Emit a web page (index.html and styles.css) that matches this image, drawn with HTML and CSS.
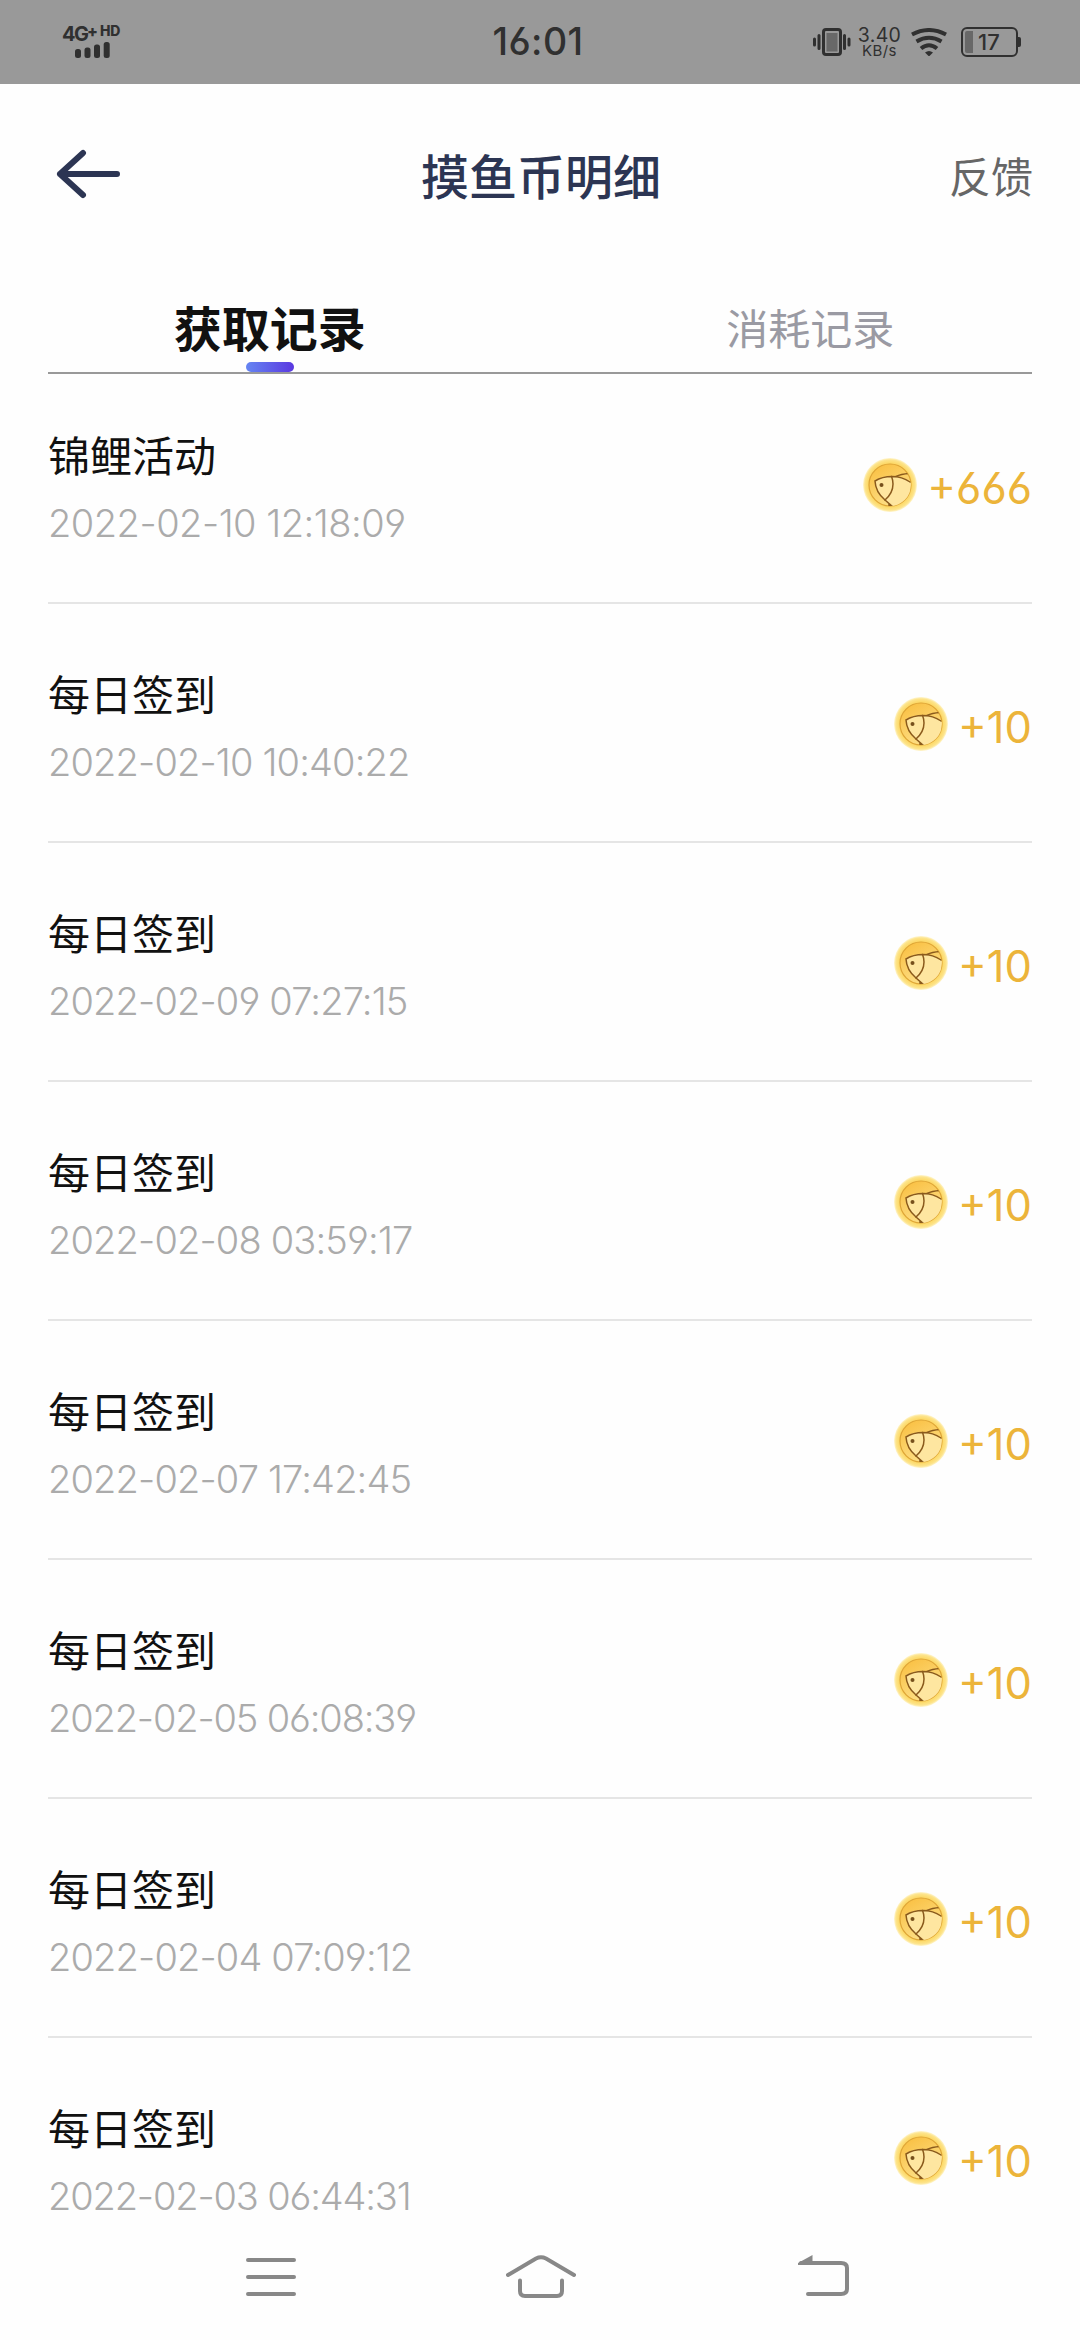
FILE: index.html
```html
<!DOCTYPE html>
<html lang="zh-CN">
<head>
<meta charset="utf-8">
<title>摸鱼币明细</title>
<link rel="stylesheet" href="styles.css">
</head>
<body>
<svg class="defs" width="0" height="0" aria-hidden="true">
  <defs>
    <radialGradient id="rim" cx="50%" cy="50%" r="50%">
      <stop offset="0.72" stop-color="#fbcf58"/>
      <stop offset="0.84" stop-color="#fddc70"/>
      <stop offset="0.93" stop-color="#fde48c"/>
      <stop offset="1" stop-color="#fff6d2"/>
    </radialGradient>
    <linearGradient id="face" x1="0" y1="0" x2="0.5" y2="1">
      <stop offset="0" stop-color="#f9bd3c"/>
      <stop offset="1" stop-color="#fddf86"/>
    </linearGradient>
    <clipPath id="faceclip"><circle cx="27" cy="27" r="21"/></clipPath>
    <symbol id="coin" viewBox="0 0 54 54">
      <circle cx="27" cy="27" r="27" fill="url(#rim)"/>
      <circle cx="27" cy="27" r="21" fill="url(#face)" stroke="#dea536" stroke-width="1.2"/>
      <g clip-path="url(#faceclip)">
        <path d="M12 22 Q20 18 29 18 Q40 18 48 25 L47 38 Q38 50 28 49 L22 42 Q13 34 12 22Z" fill="#fee6a0"/>
        <g fill="none" stroke="#8a5a1c" stroke-width="1.5" stroke-linecap="round">
          <path d="M47 24 Q39 18.5 29 18.5 Q19 18.5 12 23 Q12.500 34 22 42 Q30 35 30 26 Q30 22 28.500 18.500"/>
          <path d="M33 18.500 Q38 16 46 15.500"/>
          <path d="M22 42 L30 49 M26 46 V50"/>
        </g>
      </g>
      <circle cx="18.500" cy="27" r="2" fill="#76501c"/>
    </symbol>
  </defs>
</svg>

<header class="status">
  <div class="network">
    <div class="network-type"><span>4G</span><b class="plus">+</b><b class="hd">HD</b></div>
    <svg class="signal" width="35" height="16" viewBox="0 0 35 16"><g fill="#303030"><rect x="0" y="7" width="6" height="9" rx="2.500"/><rect x="9.500" y="5.500" width="6" height="10.500" rx="2.500"/><rect x="19" y="2.500" width="6" height="13.500" rx="2.500"/><rect x="28.700" y="0" width="6" height="16" rx="2.500"/></g></svg>
  </div>
  <time class="clock">16:01</time>
  <div class="indicators">
    <svg class="vibrate" width="38" height="28" viewBox="0 0 38 28"><rect x="10.500" y="1.500" width="17" height="25" rx="2.500" fill="none" stroke="#303030" stroke-width="3"/><rect x="13.500" y="5" width="11" height="18.500" fill="#686868"/><path d="M1.500 11v6M6 7.500v13M31.500 7.500v13M36 11v6" stroke="#303030" stroke-width="3" stroke-linecap="round"/></svg>
    <div class="speed"><span class="rate">3.40</span><span class="unit">KB/s</span></div>
    <svg class="wifi" width="36" height="28" viewBox="0 0 36 28"><g fill="none" stroke="#303030" stroke-width="4"><path d="M1 6.500Q18-2.500 35 6.500"/><path d="M5.500 13.500Q18 6 30.500 13.500"/><path d="M10 20.500Q18 14 26 20.500"/></g><path d="M14 24.500Q18 21.500 22 24.500L18 28.500Z" fill="#303030"/></svg>
    <div class="battery"><span class="level"></span><span class="percent">17</span></div>
  </div>
</header>

<nav class="titlebar">
  <svg class="back" width="64" height="50" viewBox="0 0 64 50"><path d="M61 25H4M27 4L4 25L27 46" fill="none" stroke="#2c3553" stroke-width="6" stroke-linecap="round" stroke-linejoin="round"/></svg>
  <h1 class="title">摸鱼币明细</h1>
  <a class="feedback">反馈</a>
</nav>

<div class="tabs">
  <div class="tab active">获取记录</div>
  <div class="tab">消耗记录</div>
</div>

<main class="list">
  <div class="row"><div class="info"><div class="name">锦鲤活动</div><div class="date">2022-02-10 12:18:09</div></div><div class="amount"><svg class="coin"><use href="#coin"/></svg><span>+666</span></div></div>
  <div class="row"><div class="info"><div class="name">每日签到</div><div class="date">2022-02-10 10:40:22</div></div><div class="amount"><svg class="coin"><use href="#coin"/></svg><span>+10</span></div></div>
  <div class="row"><div class="info"><div class="name">每日签到</div><div class="date">2022-02-09 07:27:15</div></div><div class="amount"><svg class="coin"><use href="#coin"/></svg><span>+10</span></div></div>
  <div class="row"><div class="info"><div class="name">每日签到</div><div class="date">2022-02-08 03:59:17</div></div><div class="amount"><svg class="coin"><use href="#coin"/></svg><span>+10</span></div></div>
  <div class="row"><div class="info"><div class="name">每日签到</div><div class="date">2022-02-07 17:42:45</div></div><div class="amount"><svg class="coin"><use href="#coin"/></svg><span>+10</span></div></div>
  <div class="row"><div class="info"><div class="name">每日签到</div><div class="date">2022-02-05 06:08:39</div></div><div class="amount"><svg class="coin"><use href="#coin"/></svg><span>+10</span></div></div>
  <div class="row"><div class="info"><div class="name">每日签到</div><div class="date">2022-02-04 07:09:12</div></div><div class="amount"><svg class="coin"><use href="#coin"/></svg><span>+10</span></div></div>
  <div class="row"><div class="info"><div class="name">每日签到</div><div class="date">2022-02-03 06:44:31</div></div><div class="amount"><svg class="coin"><use href="#coin"/></svg><span>+10</span></div></div>
</main>

<footer class="sysnav">
  <svg width="50" height="44" viewBox="0 0 50 44"><path d="M2 5H48M2 22H48M2 39H48" stroke="#888" stroke-width="4" stroke-linecap="round"/></svg>
  <svg class="home" width="70" height="44" viewBox="0 0 70 44"><g fill="none" stroke="#888" stroke-width="4" stroke-linecap="round"><path d="M2 20L30 3.500Q35 1 40 3.500L68 20"/><path d="M14 25.500V36Q14 41 19 41H51Q56 41 56 36V25.500"/></g></svg>
  <svg width="51" height="44" viewBox="0 0 51 44"><path d="M3 8H43Q49 8 49 13V34Q49 39 43 39H10" fill="none" stroke="#888" stroke-width="4" stroke-linecap="round"/><path d="M0 10V8L14.500 0V10Z" fill="#888"/></svg>
</footer>
</body>
</html>
```
FILE: styles.css
```css
* { box-sizing: border-box; }

body {
  margin: 0;
  width: 1080px;
  height: 2340px;
  overflow: hidden;
  display: flex;
  flex-direction: column;
  background: #fefefe;
  font-family: Inter, "Noto Sans CJK SC", sans-serif;
  font-feature-settings: "cv03", "cv04";
}

svg { display: block; flex: none; }
.defs { position: absolute; }

.status {
  height: 84px;
  flex: none;
  background: #999;
  color: #303030;
  display: grid;
  grid-template-columns: 1fr auto 1fr;
  align-items: center;
  padding: 0 60px 0 62px;
}

.network { width: 62px; }
.network-type {
  display: flex;
  height: 17px;
  line-height: 17px;
  font-size: 20px;
  font-weight: 700;
  letter-spacing: -1.5px;
  margin-bottom: -1px;
}
.network-type span { width: 25px; }
.plus { font-size: 16px; line-height: 10px; width: 13px; font-weight: 800; }
.hd { font-size: 14px; line-height: 10px; letter-spacing: -0.2px; font-weight: 800; }
.signal { margin-left: 13px; }

.clock { font-size: 37.500px; font-weight: 500; line-height: 84px; letter-spacing: 0.4px; margin-right: 6px; }

.indicators { display: flex; align-items: center; justify-content: flex-end; }
.vibrate { margin-right: 9px; }
.speed { width: 39px; margin-right: 12px; padding-top: 1px; display: flex; flex-direction: column; align-items: center; }
.rate { font-size: 19.500px; line-height: 17px; letter-spacing: 0.3px; }
.unit { font-size: 15px; line-height: 14px; letter-spacing: 0.4px; }
.battery {
  position: relative;
  width: 57px;
  height: 30px;
  margin: 0 2px 0 14px;
  padding: 2px;
  border: 2px solid #303030;
  border-radius: 6px;
  display: flex;
  align-items: center;
}
.battery::after {
  content: "";
  position: absolute;
  right: -5px;
  top: 8px;
  width: 3px;
  height: 10px;
  border-radius: 0 2px 2px 0;
  background: #303030;
}
.level { width: 8px; height: 22px; background: #686868; border-radius: 2px 0 0 2px; }
.percent { font-size: 22px; font-weight: 500; line-height: 22px; margin-left: 5px; }

.titlebar {
  height: 180px;
  flex: none;
  display: grid;
  grid-template-columns: 1fr auto 1fr;
  align-items: center;
  padding: 0 47px 0 56px;
}
.title { margin: 0; font-size: 48px; font-weight: 500; line-height: 60px; color: #2c3553; padding-top: 7px; padding-right: 7px; }
.feedback { justify-self: end; font-size: 42px; line-height: 60px; color: #666; padding-top: 7px; }

.tabs {
  margin: 34px 48px 0;
  height: 76px;
  flex: none;
  display: flex;
  border-bottom: 2px solid #999;
}
.tab {
  position: relative;
  width: 444px;
  padding-top: 2px;
  text-align: center;
  font-size: 42px;
  line-height: 60px;
  color: #9a9aa3;
}
.tab + .tab { margin-left: 97px; }
.tab.active { font-size: 48px; font-weight: 700; color: #111; }
.tab.active::after {
  content: "";
  position: absolute;
  left: 198px;
  bottom: 0;
  width: 48px;
  height: 10px;
  border-radius: 5px;
  background: linear-gradient(90deg, #6585f2, #5a38e0);
}

.list { margin: 0 48px; height: 1852px; flex: none; overflow: hidden; }
.row {
  height: 239px;
  display: flex;
  justify-content: space-between;
  border-bottom: 2px solid #e5e5e5;
}
.row:first-child { height: 230px; }
.row:first-child .info { padding-top: 53px; }
.row:first-child .amount { padding-top: 84px; }
.row:last-child { height: 185px; border-bottom: 0; }
.info { padding-top: 62px; }
.name { font-size: 42px; line-height: 60px; color: #111; }
.date { font-size: 38px; line-height: 46px; margin-top: 13px; font-weight: 350; letter-spacing: -0.85px; color: #ababab; }
.row:first-child .date { letter-spacing: -0.5px; }
.row:nth-child(6) .date, .row:nth-child(8) .date { letter-spacing: -1.15px; }
.amount { display: flex; padding-top: 93px; color: #ecb43a; font-size: 43.500px; line-height: 60px; }
.coin { width: 54px; height: 54px; margin-right: 10px; }

.sysnav {
  flex: 1;
  display: flex;
  padding: 29px 0 0 246px;
}
.home { margin: 0 222px 0 210px; }
```
